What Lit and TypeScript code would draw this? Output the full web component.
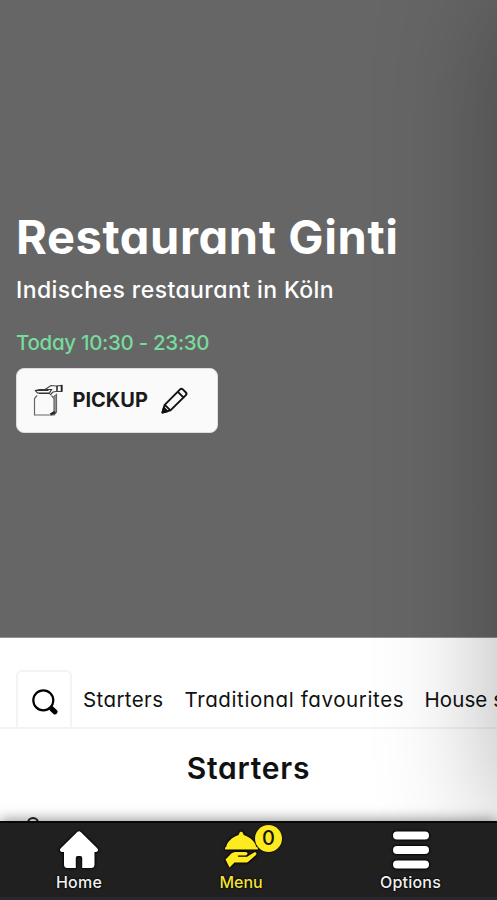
import { LitElement, html, css, svg } from "lit";
import { customElement } from "lit/decorators.js";

const bagIcon = svg`<svg class="bag" viewBox="0 0 32 34" fill="none" stroke="#666" stroke-width="1.200">
  <path d="M5 11.500 2.500 14.500v16.500h19.500V14.500l-2.500-3" />
  <path d="M21.500 13l3-2.500v17.500l-2.500 3M23 12.500v17" />
  <path d="M18.500 30.500l4.500-2.500" stroke="#222" stroke-width="2.500" />
  <path d="M3.500 6.500l4-1h12l-2 3.500H5.500z M4.500 6.500h12M7 9.500h11" stroke="#333" />
  <path d="M13 5.500l6-4 5 .5 6-.7v6l-6 .2-3 .5-3 3" stroke="#444" />
  <path d="M25 2v5M29.500 1v6.500" stroke="#222" stroke-width="1.500" />
</svg>`;

const pencilIcon = svg`<svg class="pencil" viewBox="0 0 28 28" fill="none" stroke="#111" stroke-width="2" stroke-linejoin="round">
  <path d="M1.500 26.500 3.800 18.500 19.800 2.500a2 2 0 0 1 2.800 0l3.200 3.200a2 2 0 0 1 0 2.800L9.800 24.200z" />
  <path d="M17.500 5l6 6M4 18.500l5.500 5.500" />
  <path d="M1.500 26.500l1.400-5 3.600 3.600z" fill="#111" />
</svg>`;

const searchIcon = svg`<svg class="search" viewBox="0 0 28 28" fill="none" stroke="#000">
  <circle cx="11.300" cy="11.300" r="10" stroke-width="2.200" />
  <path d="M18 18l2 2" stroke-width="3" />
  <path d="M19.800 19.800l3.200 3" stroke-width="5.200" stroke-linecap="round" />
</svg>`;

const homeIcon = svg`<svg class="nav-icon" viewBox="0 0 40 40" fill="#fff">
  <path d="M18 2.200a2.800 2.800 0 0 1 4 0l16 15.800c1.800 1.800 1 4-1 4h-1.500v12.500a3.500 3.500 0 0 1-3.500 3.500h-8.800V28a2 2 0 0 0-2-2h-2.400a2 2 0 0 0-2 2v10H8.500A3.500 3.500 0 0 1 5 34.500V22H3c-2 0-2.800-2.200-1-4z" />
</svg>`;

const clocheIcon = svg`<svg class="nav-icon" viewBox="0 0 40 40" fill="#fdea1f">
  <path d="M5 17.500C6 12 10.500 7.500 17.500 5L18.300 3.200c.6-2 3.100-2 3.700 0L22.800 5C29.800 7.500 34.500 12 35.500 17.500z" />
  <rect x="4" y="17" width="33" height="2.600" rx="1.200" />
  <path d="M4.500 29.500 10 23.700c1.800-1.600 4-2 7-1.700h7.500c2.700.3 2.700 3 0 3.400h-7.500v1.400h9l7-4.200c1.800-1 3.200.6 2 2.300l-7.500 6.500c-1 .9-2 1.200-3.300 1.200H13.500L8.500 37.500z" />
</svg>`;

const barsIcon = svg`<svg class="nav-icon" viewBox="0 0 40 40" fill="#fff">
  <rect x="2" y="1.500" width="36" height="8" rx="4" />
  <rect x="2" y="16" width="36" height="8" rx="4" />
  <rect x="2" y="30.500" width="36" height="8" rx="4" />
</svg>`;

@customElement("app-root")
export class AppRoot extends LitElement {
  static styles = css`
    :host {
      display: flex;
      flex-direction: column;
      position: relative;
      width: 100%;
      height: 900px;
      overflow: hidden;
      background: #fff;
      color: #111;
      font-family: Inter, "Liberation Sans", sans-serif;
      font-feature-settings: "cv11", "ss03";
      white-space: nowrap;
    }
    * { box-sizing: border-box; }
    svg { display: block; flex: none; overflow: visible; }
    .hero {
      height: 638px;
      flex: none;
      padding: 208px 16px 0;
      background: #666;
      color: #fff;
      border-bottom: 1px solid #929292;
    }
    h1, h2, p { margin: 0; }
    h1 { font-size: 47px; line-height: 58px; font-weight: 700; letter-spacing: 0.620px; }
    .tagline { font-size: 23px; line-height: 30px; margin-top: 9px; font-weight: 450; letter-spacing: 0.420px; }
    .hours { font-size: 20.500px; line-height: 28px; margin-top: 24px; color: #77db9b; font-weight: 450; letter-spacing: -0.300px; }
    .pickup {
      display: flex;
      align-items: center;
      width: 202px;
      height: 65px;
      margin-top: 11px;
      margin-left: -0.500px;
      padding: 0 0 0 15px;
      border: 1px solid #ddd;
      border-radius: 8px;
      background: #fafafa;
      color: #1b1b1b;
      font-family: inherit;
      font-feature-settings: inherit;
      font-size: 20px;
      font-weight: 650;
      text-align: left;
    }
    .bag { width: 32px; height: 34px; }
    .pickup-label { margin: -2px 0 0 9px; width: 88px; }
    .pencil { width: 27px; height: 27px; }
    .tabs {
      display: flex;
      height: 91px;
      flex: none;
      padding: 32px 0 0 16px;
      border-bottom: 2px solid #f3f3f3;
      font-size: 20.500px;
      line-height: 60px;
    }
    .tab-search {
      width: 56px;
      height: 58px;
      flex: none;
      padding: 17px 0 0 14px;
      border: 2px solid #f3f3f3;
      border-bottom: 0;
      border-radius: 6px 6px 0 0;
    }
    .search { width: 28px; height: 28px; }
    .tab { flex: none; letter-spacing: 0.610px; }
    .tab-a { margin-left: 11px; width: 101.500px; letter-spacing: 0.400px; }
    .tab-b { width: 240px; }
    .tab-c { letter-spacing: 0.100px; }
    .section { flex: 1; min-height: 0; overflow: hidden; display: flex; flex-direction: column; }
    h2 { text-align: center; font-size: 30px; line-height: 40px; margin-top: 19px; font-weight: 600; letter-spacing: 0.750px; }
    .next { padding-left: 27px; margin-top: 29px; line-height: 22px; }
    .next-mark { display: block; width: 12px; height: 12px; border: 2px solid #222; border-radius: 50%; }
    .drawer-shadow {
      position: absolute;
      left: 100%;
      top: 0;
      width: 300px;
      height: 822px;
      box-shadow: 0 0 120px rgba(0, 0, 0, 0.31);
    }
    .nav {
      position: relative;
      display: flex;
      height: 79px;
      flex: none;
      background: #202021;
      border-top: 2px solid #080808;
      border-bottom: 3px solid #29282c;
      box-shadow: 0 -2px 12px rgba(0, 0, 0, 0.4);
      color: #f2f2f2;
    }
    .nav-item {
      display: flex;
      flex-direction: column;
      align-items: center;
      width: 158px;
      padding-top: 7px;
      font-size: 16px;
      line-height: 22px;
      font-weight: 500;
      letter-spacing: 0.200px;
      text-shadow: 0 0 2px #000, 0 0 2px #000;
    }
    .nav-item.menu { width: 166px; color: #f2e23a; letter-spacing: 0; }
    .nav-item.options { width: 173px; }
    .nav-icon { width: 40px; height: 40px; filter: drop-shadow(0 0 1px #000) drop-shadow(0 0 1px #000); }
    .icon-wrap { position: relative; }
    .nav-label { margin-top: 1px; }
    .badge {
      position: absolute;
      left: 34px;
      top: -5px;
      width: 27px;
      height: 27px;
      border-radius: 50%;
      background: #fdea1f;
      color: #151515;
      font-size: 20px;
      line-height: 27px;
      letter-spacing: 0;
      text-align: center;
      text-shadow: none;
      box-shadow: 0 0 2px #000;
    }
  `;

  render() {
    return html`
      <header class="hero">
        <h1>Restaurant Ginti</h1>
        <p class="tagline">Indisches restaurant in Köln</p>
        <p class="hours">Today 10:30 - 23:30</p>
        <button class="pickup">${bagIcon}<span class="pickup-label">PICKUP</span>${pencilIcon}</button>
      </header>
      <div class="tabs">
        <div class="tab-search">${searchIcon}</div>
        <span class="tab tab-a">Starters</span>
        <span class="tab tab-b">Traditional favourites</span>
        <span class="tab tab-c">House specialities</span>
      </div>
      <main class="section">
        <h2>Starters</h2>
        <div class="next"><span class="next-mark"></span></div>
      </main>
      <div class="drawer-shadow"></div>
      <nav class="nav">
        <div class="nav-item">${homeIcon}<span class="nav-label">Home</span></div>
        <div class="nav-item menu">
          <div class="icon-wrap">${clocheIcon}<span class="badge">0</span></div>
          <span class="nav-label">Menu</span>
        </div>
        <div class="nav-item options">${barsIcon}<span class="nav-label">Options</span></div>
      </nav>
    `;
  }
}
